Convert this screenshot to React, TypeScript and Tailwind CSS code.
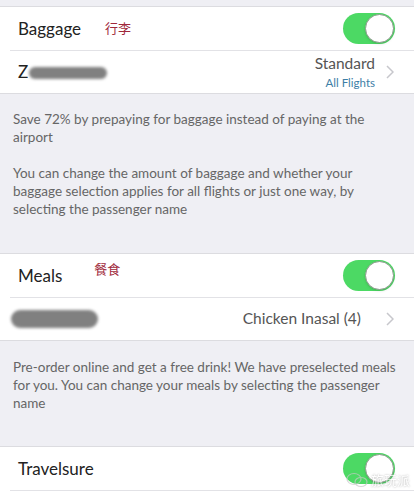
function Toggle() {
  return (
    <div className="relative w-[52px] h-[31px] rounded-full bg-[#4cd964] shrink-0">
      <div className="absolute right-[1px] top-[1px] w-[29px] h-[29px] rounded-full bg-white border border-[#8a9a8a] shadow-sm" />
    </div>
  );
}

function Blob({ className }: { className: string }) {
  return <div className={`bg-[#808080] rounded-full blur-[1.5px] ${className}`} />;
}

function Chevron() {
  return (
    <svg width="8" height="14" viewBox="0 0 8 14" fill="none" stroke="#c7c7cc" strokeWidth="1.5" className="shrink-0">
      <polyline points="1,1 7,7 1,13" />
    </svg>
  );
}

export default function App() {
  return (
    <div className="w-[414px] h-[502px] overflow-hidden bg-[#efeff4] text-[#222] relative" style={{ fontFamily: 'Lato, "Noto Sans CJK SC", sans-serif' }}>
      <div className="h-[6px]" />

      {/* Baggage */}
      <div className="bg-white border-y border-[#dcdce0]">
        <div className="h-[43px] flex items-center pl-[18px] pr-[19px]">
          <span className="text-[17px]">Baggage</span>
          <span className="ml-[24px] text-[13px] text-[#a0283a]">行李</span>
          <div className="flex-1" />
          <Toggle />
        </div>
        <div className="ml-[10px] h-px bg-[#e2e2e6]" />
        <div className="h-[42px] flex items-center pl-[18px] pr-[20px]">
          <span className="text-[17px]">Z</span>
          <Blob className="w-[78px] h-[12px] ml-[1px] mt-[2px]" />
          <div className="flex-1" />
          <div className="flex flex-col items-end leading-none">
            <span className="text-[15.5px] text-[#555]">Standard</span>
            <span className="text-[11.5px] text-[#3d7ea6] mt-[5px]">All Flights</span>
          </div>
          <div className="ml-[11px]">
            <Chevron />
          </div>
        </div>
      </div>

      <div className="h-[159px] pt-[16px] pl-[13px] pr-[20px] text-[13.5px] leading-[18px] text-[#666]">
        <p>Save 72% by prepaying for baggage instead of paying at the airport</p>
        <p className="mt-[18px]">You can change the amount of baggage and whether your baggage selection applies for all flights or just one way, by selecting the passenger name</p>
      </div>

      {/* Meals */}
      <div className="bg-white border-y border-[#dcdce0]">
        <div className="h-[43px] flex items-center pl-[18px] pr-[19px]">
          <span className="text-[17px]">Meals</span>
          <span className="ml-[32px] -mt-[12px] text-[13px] text-[#a0283a]">餐食</span>
          <div className="flex-1" />
          <Toggle />
        </div>
        <div className="ml-[10px] h-px bg-[#e2e2e6]" />
        <div className="h-[42px] flex items-center pl-[11px] pr-[20px]">
          <Blob className="w-[87px] h-[18px]" />
          <div className="flex-1" />
          <span className="text-[15.5px] text-[#555]">Chicken Inasal (4)</span>
          <div className="ml-[25px]">
            <Chevron />
          </div>
        </div>
      </div>

      <div className="h-[105px] pt-[17px] pl-[13px] pr-[8px] text-[13.5px] leading-[18px] text-[#666]">
        <p>Pre-order online and get a free drink! We have preselected meals for you. You can change your meals by selecting the passenger name</p>
      </div>

      {/* Travelsure */}
      <div className="bg-white border-t border-[#dcdce0]">
        <div className="h-[43px] flex items-center pl-[18px] pr-[19px]">
          <span className="text-[17px]">Travelsure</span>
          <div className="flex-1" />
          <Toggle />
        </div>
        <div className="ml-[10px] h-px bg-[#e2e2e6]" />
        <div className="h-[20px]" />
      </div>

      {/* watermark */}
      <div className="absolute right-[4px] bottom-[12px] flex items-center gap-[3px] opacity-70">
        <svg width="22" height="16" viewBox="0 0 22 16" fill="none" stroke="#c8c8c8" strokeWidth="1.2">
          <ellipse cx="8" cy="7" rx="7" ry="5.5" />
          <ellipse cx="15" cy="10" rx="6" ry="4.5" />
        </svg>
        <span className="text-[13px] text-white" style={{ textShadow: '0 0 2px #888' }}>旅玩派</span>
      </div>
    </div>
  );
}
